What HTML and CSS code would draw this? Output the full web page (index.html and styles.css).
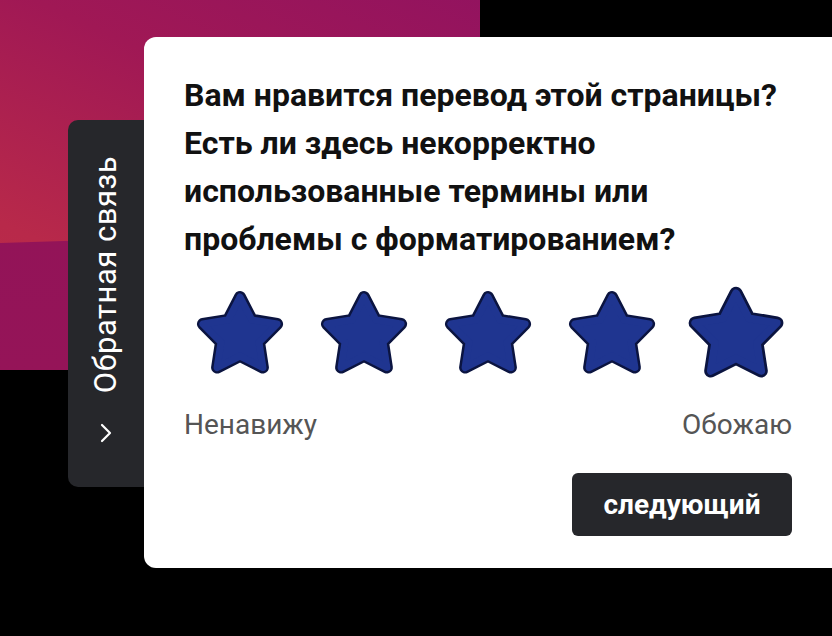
FILE: index.html
```html
<!DOCTYPE html>
<html lang="ru">
<head>
<meta charset="utf-8">
<link rel="stylesheet" href="styles.css">
</head>
<body>
<div class="backdrop"><div class="band"></div></div>
<div class="widget">
  <div class="tab">
    <span class="tab-text">Обратная связь</span>
    <svg class="chev" width="14" height="20" viewBox="0 0 14 20"><path d="M3 2 L11 10 L3 18" fill="none" stroke="#fff" stroke-width="2.2" stroke-linecap="round" stroke-linejoin="round"/></svg>
  </div>
  <div class="card">
    <h1 class="title">Вам нравится перевод этой страницы? Есть ли здесь некорректно использованные термины или проблемы с форматированием?</h1>
    <svg width="0" height="0" class="defs">
      <defs>
        <symbol id="star" viewBox="0 0 96 96">
          <polygon points="48,11 59.76,33.82 85.09,37.95 67.02,56.18 70.92,81.55 48,70 25.08,81.55 28.98,56.18 10.91,37.95 36.24,33.82" fill="#1b2f86" stroke="#0b1440" stroke-width="12" stroke-linejoin="round"/>
          <polygon points="48,11 59.76,33.82 85.09,37.95 67.02,56.18 70.92,81.55 48,70 25.08,81.55 28.98,56.18 10.91,37.95 36.24,33.82" fill="#1f3590" stroke="#1f3590" stroke-width="7" stroke-linejoin="round"/>
        </symbol>
      </defs>
    </svg>
    <div class="stars">
      <svg class="star"><use href="#star"/></svg>
      <svg class="star"><use href="#star"/></svg>
      <svg class="star"><use href="#star"/></svg>
      <svg class="star"><use href="#star"/></svg>
      <svg class="star big"><use href="#star"/></svg>
    </div>
    <div class="labels">
      <span>Ненавижу</span>
      <span>Обожаю</span>
    </div>
    <div class="actions">
      <button class="next">следующий</button>
    </div>
  </div>
</div>
</body>
</html>
```
FILE: styles.css
```css
html, body {
  margin: 0;
  padding: 0;
  background: #000;
  width: 832px;
  height: 636px;
  overflow: hidden;
  font-family: Roboto, "Liberation Sans", sans-serif;
}
.backdrop {
  position: absolute;
  left: 0;
  top: 0;
  width: 480px;
  height: 370px;
  background: linear-gradient(205deg, #93135f 0%, #a01855 35%, #b8294a 75%, #bc2c47 100%);
}
.band {
  position: absolute;
  left: 0;
  top: 0;
  width: 100%;
  height: 100%;
  background: linear-gradient(180deg, #8f1358 0%, #951458 100%);
  clip-path: polygon(0 243px, 480px 228px, 480px 370px, 0 370px);
}
.widget {
  position: relative;
  display: flex;
  align-items: flex-start;
  padding: 37px 0 0 68px;
}
.tab {
  margin-top: 83px;
  width: 76px;
  height: 367px;
  box-sizing: border-box;
  background: #26272b;
  border-radius: 10px 0 0 10px;
  display: flex;
  flex-direction: column;
  align-items: center;
  padding-top: 36px;
  color: #fff;
}
.tab-text {
  writing-mode: vertical-rl;
  transform: rotate(180deg);
  font-size: 31px;
  line-height: 36px;
  letter-spacing: 0.5px;
}
.chev {
  margin-top: 30px;
}
.card {
  width: 688px;
  height: 531px;
  box-sizing: border-box;
  background: #fff;
  border-radius: 12px 0 0 12px;
  padding: 34px 40px 0 40px;
}
.title {
  margin: 0;
  font-size: 32px;
  font-weight: 700;
  line-height: 48px;
  color: #111;
}
.defs {
  position: absolute;
}
.stars {
  display: flex;
  justify-content: space-between;
  align-items: center;
  padding: 0 8px;
  margin-top: 23px;
  height: 96px;
}
.star {
  width: 96px;
  height: 96px;
  display: block;
}
.star.big {
  transform: scale(1.1);
}
.labels {
  display: flex;
  justify-content: space-between;
  margin-top: 26px;
  font-size: 28px;
  line-height: 34px;
  color: #555;
}
.actions {
  display: flex;
  justify-content: flex-end;
  margin-top: 31px;
}
.next {
  width: 220px;
  height: 63px;
  border: none;
  border-radius: 6px;
  background: #26272b;
  color: #fff;
  font-family: Roboto, "Liberation Sans", sans-serif;
  font-size: 28px;
  font-weight: 700;
}
```
